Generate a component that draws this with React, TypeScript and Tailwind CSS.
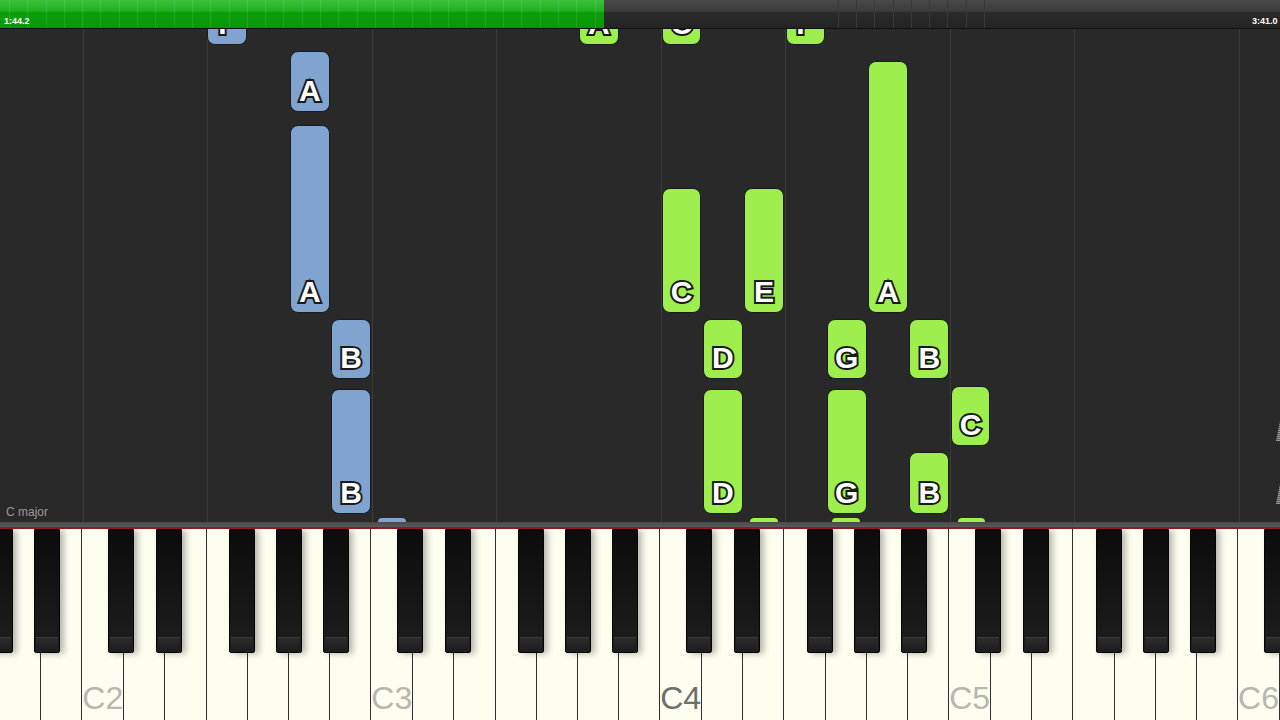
import React from 'react'

const W = 1280 / 31
const TOP = 30 // page y where the note area starts

const whiteNames = ['A', 'B', 'C', 'D', 'E', 'F', 'G']
// black key shift (px) from the white-key boundary it sits on
const blackShift: Record<string, number> = { C: -3, D: 4, F: -6, G: 0, A: 6 }

const BLUE = '#80a4cf'
const GREEN = '#9eef4e'

type Note = { key: number; top: number; bottom: number; label: string; color: string }

const notes: Note[] = [
  { key: 5, top: -10, bottom: 46, label: 'F', color: BLUE },
  { key: 7, top: 52, bottom: 113, label: 'A', color: BLUE },
  { key: 7, top: 126, bottom: 314, label: 'A', color: BLUE },
  { key: 8, top: 320, bottom: 380, label: 'B', color: BLUE },
  { key: 8, top: 390, bottom: 515, label: 'B', color: BLUE },
  { key: 14, top: -10, bottom: 46, label: 'A', color: GREEN },
  { key: 16, top: -10, bottom: 46, label: 'C', color: GREEN },
  { key: 19, top: -10, bottom: 46, label: 'F', color: GREEN },
  { key: 21, top: 62, bottom: 314, label: 'A', color: GREEN },
  { key: 16, top: 189, bottom: 314, label: 'C', color: GREEN },
  { key: 18, top: 189, bottom: 314, label: 'E', color: GREEN },
  { key: 17, top: 320, bottom: 380, label: 'D', color: GREEN },
  { key: 20, top: 320, bottom: 380, label: 'G', color: GREEN },
  { key: 22, top: 320, bottom: 380, label: 'B', color: GREEN },
  { key: 23, top: 387, bottom: 447, label: 'C', color: GREEN },
  { key: 17, top: 390, bottom: 515, label: 'D', color: GREEN },
  { key: 20, top: 390, bottom: 515, label: 'G', color: GREEN },
  { key: 22, top: 453, bottom: 515, label: 'B', color: GREEN },
]

// note tops just peeking above the keyboard
const slivers = [
  { x: 378, w: 28, color: BLUE },
  { x: 750, w: 28, color: GREEN },
  { x: 832, w: 28, color: GREEN },
  { x: 958, w: 27, color: GREEN },
]

const gridLines = [82.6, 206.5, 371.6, 495.5, 660.6, 784.5, 949.7, 1073.5, 1238.7]

function TopBar() {
  const ticks = [838, 856, 874, 893, 911, 929, 947, 966, 984]
  return (
    <div className="relative h-[29px] w-full overflow-hidden border-b border-[#111] bg-[linear-gradient(to_bottom,#4a4a4a_0%,#3c3c3c_40%,#2a2a2a_44%,#242424_100%)]">
      <div className="absolute inset-y-0 left-0 w-[604px] bg-[linear-gradient(to_bottom,#3cc23c_0%,#1eb01e_40%,#0d9e0d_44%,#099709_100%)]">
        <div className="h-full w-full bg-[repeating-linear-gradient(90deg,transparent_0,transparent_9px,rgba(255,255,255,0.1)_9px,rgba(255,255,255,0.1)_10px,transparent_10px,transparent_18.3px)]" />
      </div>
      {ticks.map((x) => (
        <div key={x} className="absolute inset-y-0 w-px bg-[#3a3a3a]" style={{ left: x }} />
      ))}
      <span className="absolute bottom-[2px] left-[4px] font-['Liberation_Sans',sans-serif] text-[9px] font-bold leading-none text-white">
        1:44.2
      </span>
      <span className="absolute bottom-[2px] left-[1252px] whitespace-nowrap font-['Liberation_Sans',sans-serif] text-[9px] font-bold leading-none text-white">
        3:41.0
      </span>
    </div>
  )
}

function NoteArea() {
  return (
    <div className="relative flex-1 overflow-hidden bg-[#292929]">
      {gridLines.map((x) => (
        <div key={x} className="absolute inset-y-0 w-px bg-[#3c3c3c]" style={{ left: Math.round(x) }} />
      ))}
      {notes.map((n, i) => (
        <div
          key={i}
          className="absolute flex flex-col items-center justify-end rounded-[8px] border border-[#1c1c1c] pb-[5px]"
          style={{
            left: n.key * W + 1,
            width: W - 1.5,
            top: n.top - TOP,
            height: n.bottom - n.top,
            background: n.color,
          }}
        >
          <span className="font-['Liberation_Sans',sans-serif] text-[30px] font-bold leading-none text-white [-webkit-text-stroke:4px_#1a1a1a] [paint-order:stroke_fill]">
            {n.label}
          </span>
        </div>
      ))}
      {slivers.map((s) => (
        <div
          key={s.x}
          className="absolute h-[4px] rounded-t-[4px]"
          style={{ left: s.x, width: s.w, top: 519 - TOP, background: s.color }}
        />
      ))}
      <span className="absolute bottom-[4px] left-[6px] font-['Liberation_Sans',sans-serif] text-[12px] leading-none text-[#9a9a9a]">
        C major
      </span>
      <div className="absolute right-0 top-[392px] h-[20px] w-[4px] bg-[repeating-linear-gradient(to_bottom,#5a5a5a_0,#5a5a5a_1px,#9a9a9a_1px,#9a9a9a_2px)] [clip-path:polygon(100%_0,100%_100%,0_100%)]" />
      <div className="absolute right-0 top-[455px] h-[20px] w-[4px] bg-[repeating-linear-gradient(to_bottom,#5a5a5a_0,#5a5a5a_1px,#9a9a9a_1px,#9a9a9a_2px)] [clip-path:polygon(100%_0,100%_100%,0_100%)]" />
    </div>
  )
}

function Keyboard() {
  const whites = Array.from({ length: 31 }, (_, i) => {
    const name = whiteNames[i % 7]
    const octave = 1 + Math.floor((i + 5) / 7)
    return { name, octave }
  })

  const blacks: number[] = [0 - 13] // G#1 on the left edge
  whites.forEach((k, i) => {
    if (k.name in blackShift) blacks.push((i + 1) * W + blackShift[k.name] - 13)
  })

  return (
    <div className="flex h-[198px] flex-col">
      <div className="h-[5px] bg-[linear-gradient(to_bottom,#4a4a4a,#5a5a5a)]" />
      <div className="h-[2px] bg-[#8e1b1f]" />
      <div className="relative flex flex-1 overflow-hidden">
        {whites.map((k, i) => (
          <div
            key={i}
            className="flex flex-1 items-end justify-center border-r-[1.5px] border-[#2e2e2e] bg-[#fdfdf0] pb-[6px]"
          >
            {k.name === 'C' && (
              <span
                className={`font-['Liberation_Sans',sans-serif] text-[32px] leading-none ${
                  k.octave === 4 ? 'text-[#6f6f6a]' : 'text-[#b7b7af]'
                }`}
              >
                C{k.octave}
              </span>
            )}
          </div>
        ))}
        {blacks.map((x, i) => (
          <div
            key={i}
            className="absolute top-0 flex h-[124px] w-[26px] flex-col justify-end rounded-b-[2px] border border-[#050505] bg-[linear-gradient(to_bottom,#0c0c0c_0%,#181818_70%,#1e1e1e_100%)] shadow-[4px_1px_6px_rgba(0,0,0,0.28)]"
            style={{ left: x }}
          >
            <div className="mx-[1px] h-[15px] rounded-b-[2px] border-t border-[#3a3a3a] bg-[linear-gradient(to_bottom,#2c2c2c,#1c1c1c)]" />
          </div>
        ))}
      </div>
    </div>
  )
}

export default function App() {
  return (
    <div className="flex h-[720px] w-[1280px] flex-col overflow-hidden bg-[#292929]">
      <TopBar />
      <NoteArea />
      <Keyboard />
    </div>
  )
}
